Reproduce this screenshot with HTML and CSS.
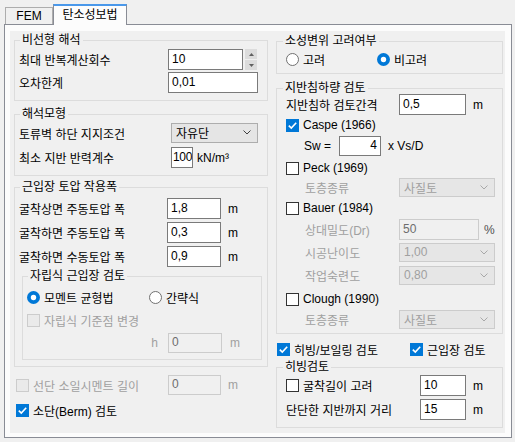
FILE: index.html
```html
<!DOCTYPE html>
<html lang="ko">
<head>
<meta charset="utf-8">
<title>탄소성보법</title>
<link rel="stylesheet" href="styles.css">
</head>
<body>
<div class="tabs">
  <div class="tab">FEM</div>
  <div class="tab active">탄소성보법</div>
</div>
<div class="panel">
  <div class="page">
    <!-- LEFT COLUMN -->
    <div class="col col-left">
      <fieldset class="grp">
        <legend>비선형 해석</legend>
        <div class="gbody pl4 pt3 pb7">
          <div class="row h21">
            <span class="lbl w149">최대 반복계산회수</span>
            <span class="inp w75">10</span>
            <span class="spin">
              <span class="sbtn"><svg width="5" height="3" viewBox="0 0 5 3"><polygon points="2.5,0 5,3 0,3" fill="#606060"/></svg></span>
              <span class="sbtn"><svg width="5" height="3" viewBox="0 0 5 3"><polygon points="0,0 5,0 2.5,3" fill="#606060"/></svg></span>
            </span>
          </div>
          <div class="row h21 mt2">
            <span class="lbl w149">오차한계</span>
            <span class="inp w90">0,01</span>
          </div>
        </div>
      </fieldset>

      <fieldset class="grp mt7">
        <legend>해석모형</legend>
        <div class="gbody pl4 pt3 pb7">
          <div class="row h20">
            <span class="lbl w152">토류벽 하단 지지조건</span>
            <span class="combo w87"><span>자유단</span><svg class="chev" width="8" height="5" viewBox="0 0 8 5"><polyline points="0.5,0.5 4,4 7.5,0.5" fill="none" stroke="#404040" stroke-width="1"/></svg></span>
          </div>
          <div class="row h21 mt4">
            <span class="lbl w152">최소 지반 반력계수</span>
            <span class="inp w22 tight">100</span>
            <span class="unit ml4">kN/m³</span>
          </div>
        </div>
      </fieldset>

      <fieldset class="grp mt5">
        <legend>근입장 토압 작용폭</legend>
        <div class="gbody pl4 pt5 pb6">
          <div class="row h21">
            <span class="lbl w148">굴착상면 주동토압 폭</span>
            <span class="inp w54">1,8</span>
            <span class="unit ml7">m</span>
          </div>
          <div class="row h21 mt3">
            <span class="lbl w148">굴착하면 주동토압 폭</span>
            <span class="inp w54">0,3</span>
            <span class="unit ml7">m</span>
          </div>
          <div class="row h21 mt3">
            <span class="lbl w148">굴착하면 수동토압 폭</span>
            <span class="inp w54">0,9</span>
            <span class="unit ml7">m</span>
          </div>

          <fieldset class="grp nested mt3">
            <legend>자립식 근입장 검토</legend>
            <div class="gbody pl4 pt8 pb6">
              <div class="row h14">
                <span class="opt w122">
                  <svg class="rad" width="13" height="13" viewBox="0 0 13 13"><circle cx="6.5" cy="6.5" r="6.5" fill="#0078d7"/><circle cx="6.5" cy="6.5" r="2.7" fill="#fff"/></svg>
                  <span>모멘트 균형법</span>
                </span>
                <span class="opt">
                  <svg class="rad" width="13" height="13" viewBox="0 0 13 13"><circle cx="6.5" cy="6.5" r="6" fill="#fff" stroke="#707070" stroke-width="1"/></svg>
                  <span>간략식</span>
                </span>
              </div>
              <div class="row h14 mt9 dis">
                <span class="cb cb-dis"></span>
                <span>자립식 기준점 변경</span>
              </div>
              <div class="row h20 mt6 dis">
                <span class="lbl w141 right">h</span>
                <span class="inp inp-dis w54">0</span>
                <span class="unit ml8">m</span>
              </div>
            </div>
          </fieldset>
        </div>
      </fieldset>

      <div class="row h20 mt8 ml2 dis">
        <span class="opt w152">
          <span class="cb cb-dis"></span>
          <span>선단 소일시멘트 길이</span>
        </span>
        <span class="inp inp-dis w53">0</span>
        <span class="unit ml7">m</span>
      </div>
      <div class="row h14 mt8 ml2">
        <span class="cb cb-on"><svg width="13" height="13" viewBox="0 0 13 13"><polyline points="2.8,6.6 5.3,9.1 10.2,3.8" fill="none" stroke="#fff" stroke-width="1.6"/></svg></span>
        <span>소단(Berm) 검토</span>
      </div>
    </div>

    <!-- RIGHT COLUMN -->
    <div class="col col-right">
      <fieldset class="grp mt1">
        <legend>소성변위 고려여부</legend>
        <div class="gbody pl9 pt5 pb7">
          <div class="row h14">
            <span class="opt w91">
              <svg class="rad" width="13" height="13" viewBox="0 0 13 13"><circle cx="6.5" cy="6.5" r="6" fill="#fff" stroke="#707070" stroke-width="1"/></svg>
              <span>고려</span>
            </span>
            <span class="opt">
              <svg class="rad" width="13" height="13" viewBox="0 0 13 13"><circle cx="6.5" cy="6.5" r="6.5" fill="#0078d7"/><circle cx="6.5" cy="6.5" r="2.7" fill="#fff"/></svg>
              <span>비고려</span>
            </span>
          </div>
        </div>
      </fieldset>

      <fieldset class="grp mt8">
        <legend>지반침하량 검토</legend>
        <div class="gbody pl9 pt0 pb4">
          <div class="row h21">
            <span class="lbl w113">지반침하 검토간격</span>
            <span class="inp w67">0,5</span>
            <span class="unit ml7">m</span>
          </div>
          <div class="row h14 mt3">
            <span class="cb cb-on"><svg width="13" height="13" viewBox="0 0 13 13"><polyline points="2.8,6.6 5.3,9.1 10.2,3.8" fill="none" stroke="#fff" stroke-width="1.6"/></svg></span>
            <span>Caspe (1966)</span>
          </div>
          <div class="row h20 mt4">
            <span class="lbl w53 pl18">Sw =</span>
            <span class="inp w42 num">4</span>
            <span class="unit ml7">x Vs/D</span>
          </div>
          <div class="row h14 mt5">
            <span class="cb"></span>
            <span>Peck (1969)</span>
          </div>
          <div class="row h19 mt3 dis">
            <span class="lbl w113 pl19">토층종류</span>
            <span class="combo combo-dis w96"><span>사질토</span><svg class="chev" width="8" height="5" viewBox="0 0 8 5"><polyline points="0.5,0.5 4,4 7.5,0.5" fill="none" stroke="#a8a8a8" stroke-width="1"/></svg></span>
          </div>
          <div class="row h14 mt4">
            <span class="cb"></span>
            <span>Bauer (1984)</span>
          </div>
          <div class="row h21 mt4">
            <span class="lbl w113 pl19 dis">상대밀도(Dr)</span>
            <span class="inp inp-dis w80">50</span>
            <span class="unit ml5 pct">%</span>
          </div>
          <div class="row h19 mt3 dis">
            <span class="lbl w113 pl19">시공난이도</span>
            <span class="combo combo-dis w96"><span>1,00</span><svg class="chev" width="8" height="5" viewBox="0 0 8 5"><polyline points="0.5,0.5 4,4 7.5,0.5" fill="none" stroke="#a8a8a8" stroke-width="1"/></svg></span>
          </div>
          <div class="row h19 mt4 dis">
            <span class="lbl w113 pl19">작업숙련도</span>
            <span class="combo combo-dis w96"><span>0,80</span><svg class="chev" width="8" height="5" viewBox="0 0 8 5"><polyline points="0.5,0.5 4,4 7.5,0.5" fill="none" stroke="#a8a8a8" stroke-width="1"/></svg></span>
          </div>
          <div class="row h14 mt7">
            <span class="cb"></span>
            <span>Clough (1990)</span>
          </div>
          <div class="row h19 mt4 dis">
            <span class="lbl w113 pl19">토층종류</span>
            <span class="combo combo-dis w96"><span>사질토</span><svg class="chev" width="8" height="5" viewBox="0 0 8 5"><polyline points="0.5,0.5 4,4 7.5,0.5" fill="none" stroke="#a8a8a8" stroke-width="1"/></svg></span>
          </div>
        </div>
      </fieldset>

      <div class="row h14 mt8 ml1">
        <span class="opt w133">
          <span class="cb cb-on"><svg width="13" height="13" viewBox="0 0 13 13"><polyline points="2.8,6.6 5.3,9.1 10.2,3.8" fill="none" stroke="#fff" stroke-width="1.6"/></svg></span>
          <span>히빙/보일링 검토</span>
        </span>
        <span class="opt">
          <span class="cb cb-on"><svg width="13" height="13" viewBox="0 0 13 13"><polyline points="2.8,6.6 5.3,9.1 10.2,3.8" fill="none" stroke="#fff" stroke-width="1.6"/></svg></span>
          <span>근입장 검토</span>
        </span>
      </div>

      <fieldset class="grp mt5">
        <legend>히빙검토</legend>
        <div class="gbody pl9 pt2 pb7">
          <div class="row h21">
            <span class="opt w134">
              <span class="cb"></span>
              <span>굴착길이 고려</span>
            </span>
            <span class="inp w46">10</span>
            <span class="unit ml7">m</span>
          </div>
          <div class="row h21 mt3">
            <span class="lbl w134">단단한 지반까지 거리</span>
            <span class="inp w46">15</span>
            <span class="unit ml7">m</span>
          </div>
        </div>
      </fieldset>
    </div>
  </div>
</div>
</body>
</html>
```

FILE: styles.css
```css
* { box-sizing: border-box; }
html, body { margin: 0; padding: 0; }
body {
  width: 515px;
  height: 442px;
  overflow: hidden;
  background: #f0f0f0;
  font-family: "Liberation Sans", "Noto Sans CJK KR", sans-serif;
  font-size: 12px;
  color: #000;
}

/* tabs */
.tabs {
  display: flex;
  align-items: flex-end;
  height: 24px;
  padding-left: 5px;
}
.tab {
  width: 48px;
  height: 17px;
  border: 1px solid #adadad;
  border-bottom: none;
  background: #f0f0f0;
  display: flex;
  align-items: center;
  justify-content: center;
  line-height: 14px;
}
.tab.active {
  position: relative;
  z-index: 1;
  width: 74px;
  height: 21px;
  margin-bottom: -1px;
  background: #fcfcfc;
  border-color: #898c95;
  border-top: 2px solid #4a98ea;
  padding-bottom: 1px;
}

/* panel */
.panel {
  margin-left: 4px;
  width: 508px;
  height: 414px;
  border: 1px solid #898c95;
  background: #fcfcfc;
  padding: 6px 6px 4px 5px;
}
.page {
  height: 402px;
  background: #f0f0f0;
  padding-left: 4px;
  display: grid;
  grid-template-columns: 254px 227px;
  column-gap: 8px;
  align-items: start;
}
.col-left { padding-top: 3px; }
.col-right { padding-top: 3px; }

/* group boxes */
.grp {
  margin: 0;
  padding: 0;
  min-width: 0;
  border: 1px solid #dcdcdc;
}
.grp > legend {
  margin-left: 5px;
  padding: 0 2px;
  height: 12px;
  line-height: 12px;
}
.col-right .grp > legend { margin-left: 6px; }
.nested {
  margin-left: 3px;
  margin-right: 5px;
}

.pl4 { padding-left: 4px; }
.pl9 { padding-left: 9px; }
.pt0 { padding-top: 0; }
.pt2 { padding-top: 2px; }
.pt3 { padding-top: 3px; }
.pt5 { padding-top: 5px; }
.pt8 { padding-top: 8px; }
.pb4 { padding-bottom: 4px; }
.pb6 { padding-bottom: 6px; }
.pb7 { padding-bottom: 7px; }

/* rows */
.row {
  display: flex;
  align-items: center;
  white-space: nowrap;
}
.h14 { height: 14px; }
.h19 { height: 19px; }
.h20 { height: 20px; }
.h21 { height: 21px; }
.mt1 { margin-top: 1px; }
.mt2 { margin-top: 2px; }
.mt3 { margin-top: 3px; }
.mt4 { margin-top: 4px; }
.mt5 { margin-top: 5px; }
.mt6 { margin-top: 6px; }
.mt7 { margin-top: 7px; }
.mt8 { margin-top: 8px; }
.mt9 { margin-top: 9px; }
.ml1 { margin-left: 1px; }
.ml2 { margin-left: 2px; }
.ml4 { margin-left: 4px; }
.ml5 { margin-left: 5px; }
.ml7 { margin-left: 7px; }
.ml8 { margin-left: 8px; }

.lbl, .opt { flex: none; display: flex; align-items: center; }
.lbl.right { justify-content: flex-end; padding-right: 10px; }
.pl18 { padding-left: 18px; }
.pl19 { padding-left: 19px; }

.w22 { width: 22px; }
.w42 { width: 42px; }
.w46 { width: 46px; }
.w53 { width: 53px; }
.w54 { width: 54px; }
.w67 { width: 67px; }
.w75 { width: 75px; }
.w80 { width: 80px; }
.w87 { width: 87px; }
.w90 { width: 90px; }
.w91 { width: 91px; }
.w96 { width: 96px; }
.w113 { width: 113px; }
.w122 { width: 122px; }
.w133 { width: 133px; }
.w134 { width: 134px; }
.w141 { width: 141px; }
.w148 { width: 148px; }
.w149 { width: 149px; }
.w152 { width: 152px; }

.dis { color: #a0a0a0; }
.unit { flex: none; }
.pct { color: #505050; }

/* text inputs */
.inp {
  flex: none;
  height: 100%;
  display: flex;
  align-items: center;
  padding: 0 3px 2px 3px;
  background: #fff;
  border: 1px solid #7a7a7a;
  color: #000;
  overflow: hidden;
}
.inp.tight { padding-left: 1px; padding-right: 0; letter-spacing: -0.3px; }
.inp.num { justify-content: flex-end; }
.inp-dis {
  background: #f0f0f0;
  border-color: #cccccc;
  color: #6d6d6d;
}

/* spinner */
.spin {
  flex: none;
  margin-left: 2px;
  width: 12px;
  height: 21px;
  display: flex;
  flex-direction: column;
  justify-content: space-between;
}
.sbtn {
  height: 10px;
  background: #dcdcdc;
  display: flex;
  align-items: center;
  justify-content: center;
}

/* combos */
.combo {
  flex: none;
  height: 100%;
  display: flex;
  align-items: center;
  justify-content: space-between;
  padding: 0 6px 1px 4px;
  background: #e5e5e5;
  border: 1px solid #adadad;
  color: #000;
}
.combo-dis {
  background: #e6e6e6;
  border-color: #cccccc;
  color: #a0a0a0;
}
.chev { flex: none; }

/* check boxes and radios */
.cb {
  flex: none;
  width: 13px;
  height: 13px;
  margin-right: 4px;
  background: #fff;
  border: 1px solid #333;
  display: block;
}
.cb svg { display: block; }
.cb-on {
  background: #0078d7;
  border: none;
}
.cb-dis {
  background: #eaeaea;
  border-color: #cccccc;
}
.rad {
  flex: none;
  display: block;
  margin-right: 4px;
}
```
